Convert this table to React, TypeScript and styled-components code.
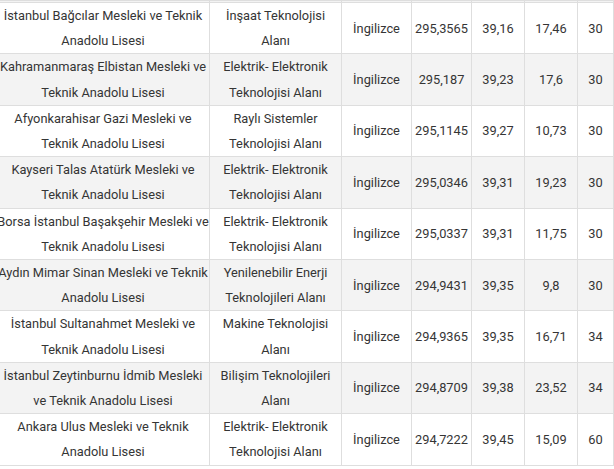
import styled, { createGlobalStyle } from 'styled-components';

const GlobalStyle = createGlobalStyle`
  html, body {
    margin: 0;
    padding: 0;
    background: #fff;
  }
  body {
    font-family: Roboto, 'Liberation Sans', sans-serif;
    color: #333;
  }
`;

const Frame = styled.div`
  width: 614px;
  height: 469px;
  overflow: hidden;
`;

const Table = styled.table`
  border-collapse: collapse;
  margin-left: -4px;
  table-layout: fixed;
  width: 617px;
  font-size: 12.8px;
`;

const Row = styled.tr<{ $shade: boolean }>`
  background: ${({ $shade }) => ($shade ? '#f3f3f3' : '#fff')};
`;

const CutRow = styled.tr`
  background: #f3f3f3;
  height: 2px;

  td {
    padding: 0;
    line-height: 0;
  }
`;

const Cell = styled.td`
  border: 1px solid #dedede;
  padding: 0;
  text-align: center;
  vertical-align: middle;
  line-height: 25.2px;
  white-space: pre;
  color: #353535;
`;

const WIDTHS = [213, 132, 70, 60, 53, 53, 36];

type Entry = [string, string, string, string, string, string, string];

const ROWS: Entry[] = [
  ['İstanbul Bağcılar Mesleki ve Teknik\nAnadolu Lisesi', 'İnşaat Teknolojisi\nAlanı', 'İngilizce', '295,3565', '39,16', '17,46', '30'],
  ['Kahramanmaraş Elbistan Mesleki ve\nTeknik Anadolu Lisesi', 'Elektrik- Elektronik\nTeknolojisi Alanı', 'İngilizce', '295,187', '39,23', '17,6', '30'],
  ['Afyonkarahisar Gazi Mesleki ve\nTeknik Anadolu Lisesi', 'Raylı Sistemler\nTeknolojisi Alanı', 'İngilizce', '295,1145', '39,27', '10,73', '30'],
  ['Kayseri Talas Atatürk Mesleki ve\nTeknik Anadolu Lisesi', 'Elektrik- Elektronik\nTeknolojisi Alanı', 'İngilizce', '295,0346', '39,31', '19,23', '30'],
  ['Borsa İstanbul Başakşehir Mesleki ve\nTeknik Anadolu Lisesi', 'Elektrik- Elektronik\nTeknolojisi Alanı', 'İngilizce', '295,0337', '39,31', '11,75', '30'],
  ['Aydın Mimar Sinan Mesleki ve Teknik\nAnadolu Lisesi', 'Yenilenebilir Enerji\nTeknolojileri Alanı', 'İngilizce', '294,9431', '39,35', '9,8', '30'],
  ['İstanbul Sultanahmet Mesleki ve\nTeknik Anadolu Lisesi', 'Makine Teknolojisi\nAlanı', 'İngilizce', '294,9365', '39,35', '16,71', '34'],
  ['İstanbul Zeytinburnu İdmib Mesleki\nve Teknik Anadolu Lisesi', 'Bilişim Teknolojileri\nAlanı', 'İngilizce', '294,8709', '39,38', '23,52', '34'],
  ['Ankara Ulus Mesleki ve Teknik\nAnadolu Lisesi', 'Elektrik- Elektronik\nTeknolojisi Alanı', 'İngilizce', '294,7222', '39,45', '15,09', '60'],
];

export default function App() {
  return (
    <Frame>
      <GlobalStyle />
      <Table>
        <colgroup>
          {WIDTHS.map((w, i) => <col key={i} style={{ width: w }} />)}
        </colgroup>
        <tbody>
          <CutRow>
            {WIDTHS.map((_, i) => <Cell key={i} />)}
          </CutRow>
          {ROWS.map((row, r) => (
            <Row key={r} $shade={r % 2 === 1}>
              {row.map((text, c) => <Cell key={c}>{text}</Cell>)}
            </Row>
          ))}
        </tbody>
      </Table>
    </Frame>
  );
}
